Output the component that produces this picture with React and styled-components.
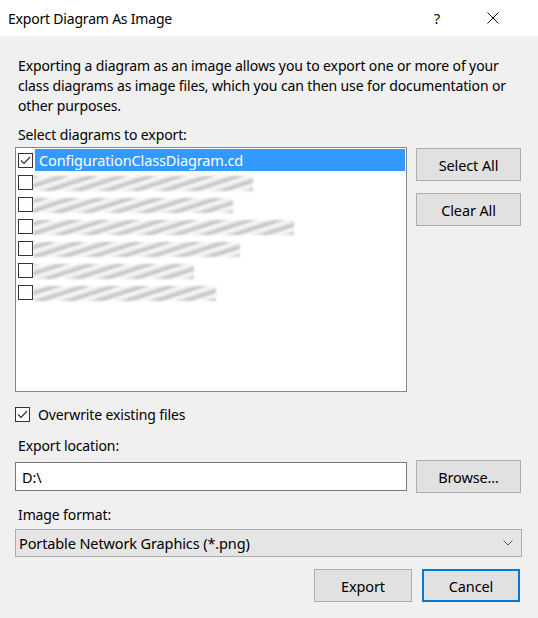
import React from 'react';
import styled, { createGlobalStyle } from 'styled-components';

const Global = createGlobalStyle`
  html, body { margin: 0; padding: 0; background: #f0f0f0; }
  * { box-sizing: border-box; }
`;

const FONT = `"Segoe UI", "Noto Sans", "Liberation Sans", sans-serif`;

const Dialog = styled.div`
  width: 538px;
  height: 618px;
  background: #f0f0f0;
  font-family: ${FONT};
  font-size: 14px;
  letter-spacing: -0.12px;
  color: #000;
  display: flex;
  flex-direction: column;
`;

const TitleBar = styled.div`
  height: 36px;
  background: #fff;
  display: flex;
  align-items: center;
  gap: 10px;
  padding: 0 22px 0 8px;
`;

const Title = styled.div`
  flex: 1;
  font-size: 14px;
  letter-spacing: -0.2px;
`;

const TitleButton = styled.div`
  width: 46px;
  height: 36px;
  display: flex;
  align-items: center;
  justify-content: center;
  font-size: 15px;
  color: #111;
`;

const Body = styled.div`
  padding: 20px 17px 0 15px;
  display: flex;
  flex-direction: column;
`;

const Text = styled.div`
  line-height: 20px;
  padding-left: 3px;
  margin-top: ${p => p.$top || 0}px;
`;

const ListRow = styled.div`
  display: flex;
  gap: 9px;
  margin-top: 2px;
`;

const ListBox = styled.div`
  width: 392px;
  height: 245px;
  background: #fff;
  border: 1px solid #828790;
  padding: 1px 1px 0 2px;
`;

const Item = styled.div`
  height: 22px;
  display: flex;
  align-items: center;
`;

const Box = styled.div`
  width: 15px;
  height: 15px;
  border: 1px solid #333;
  background: #fff;
  display: flex;
  align-items: center;
  justify-content: center;
  flex: none;
`;

const ItemLabel = styled.div`
  margin-left: 2px;
  height: 22px;
  line-height: 22px;
  padding-left: 4px;
  flex: 1;
  background: ${p => (p.$selected ? '#3399ff' : 'transparent')};
  color: ${p => (p.$selected ? '#fff' : '#000')};
  font-size: 14.5px;
`;

const Smudge = styled.div`
  width: ${p => p.$w}px;
  height: 15px;
  margin-top: 2px;
  background: repeating-linear-gradient(
    -18deg,
    rgba(120, 120, 120, 0.55) 0px,
    rgba(170, 170, 170, 0.35) 3px,
    rgba(255, 255, 255, 0) 6px,
    rgba(140, 140, 140, 0.45) 9px
  );
  filter: blur(1.3px);
`;

const SideButtons = styled.div`
  display: flex;
  flex-direction: column;
  gap: 12px;
  padding-top: 1px;
`;

const Button = styled.button`
  width: ${p => p.$w || 105}px;
  height: 33px;
  background: #e1e1e1;
  border: ${p => (p.$default ? '2px solid #0078d7' : '1px solid #adadad')};
  font-family: ${FONT};
  font-size: 14.5px;
  letter-spacing: -0.12px;
  color: #000;
  padding: 0;
`;

const CheckRow = styled.div`
  display: flex;
  align-items: center;
  gap: 8px;
  margin-top: 13px;
`;

const FieldRow = styled.div`
  display: flex;
  align-items: center;
  gap: 9px;
  margin-top: 4px;
`;

const Input = styled.div`
  width: 392px;
  height: 29px;
  background: #fff;
  border: 1px solid #7a7a7a;
  display: flex;
  align-items: center;
  padding-left: 6px;
  font-size: 14.5px;
`;

const Combo = styled.div`
  width: 507px;
  height: 28px;
  margin-top: 4px;
  background: #e5e5e5;
  border: 1px solid #adadad;
  display: flex;
  align-items: center;
  justify-content: space-between;
  padding: 0 8px 0 3px;
  font-size: 14.5px;
`;

const Footer = styled.div`
  display: flex;
  justify-content: flex-end;
  gap: 10px;
  margin-top: 12px;
  padding-right: 1px;
`;

const Check = () => (
  <svg width="11" height="9" viewBox="0 0 11 9">
    <path d="M1 4.5 L4 7.5 L10 1" fill="none" stroke="#333" strokeWidth="1.2" />
  </svg>
);

const rows = [255, 235, 296, 242, 196, 218];

export default function App() {
  return (
    <Dialog>
      <Global />
      <TitleBar>
        <Title>Export Diagram As Image</Title>
        <TitleButton>?</TitleButton>
        <TitleButton>
          <svg width="12" height="12" viewBox="0 0 12 12">
            <path d="M0.5 0.5 L11.5 11.5 M11.5 0.5 L0.5 11.5" stroke="#111" strokeWidth="1" />
          </svg>
        </TitleButton>
      </TitleBar>
      <Body>
        <Text>
          Exporting a diagram as an image allows you to export one or more of your class diagrams as image files, which you can then use for documentation or other purposes.
        </Text>
        <Text $top={9}>Select diagrams to export:</Text>
        <ListRow>
          <ListBox>
            <Item>
              <Box><Check /></Box>
              <ItemLabel $selected>ConfigurationClassDiagram.cd</ItemLabel>
            </Item>
            {rows.map((w, i) => (
              <Item key={i}>
                <Box />
                <Smudge $w={w - 35} />
              </Item>
            ))}
          </ListBox>
          <SideButtons>
            <Button>Select All</Button>
            <Button>Clear All</Button>
          </SideButtons>
        </ListRow>
        <CheckRow>
          <Box><Check /></Box>
          <span>Overwrite existing files</span>
        </CheckRow>
        <Text $top={12}>Export location:</Text>
        <FieldRow>
          <Input>D:\</Input>
          <Button>Browse...</Button>
        </FieldRow>
        <Text $top={12}>Image format:</Text>
        <Combo>
          <span>Portable Network Graphics (*.png)</span>
          <svg width="10" height="6" viewBox="0 0 10 6">
            <path d="M0.5 0.5 L5 5 L9.5 0.5" fill="none" stroke="#555" strokeWidth="1" />
          </svg>
        </Combo>
        <Footer>
          <Button $w={98}>Export</Button>
          <Button $w={98} $default>Cancel</Button>
        </Footer>
      </Body>
    </Dialog>
  );
}
